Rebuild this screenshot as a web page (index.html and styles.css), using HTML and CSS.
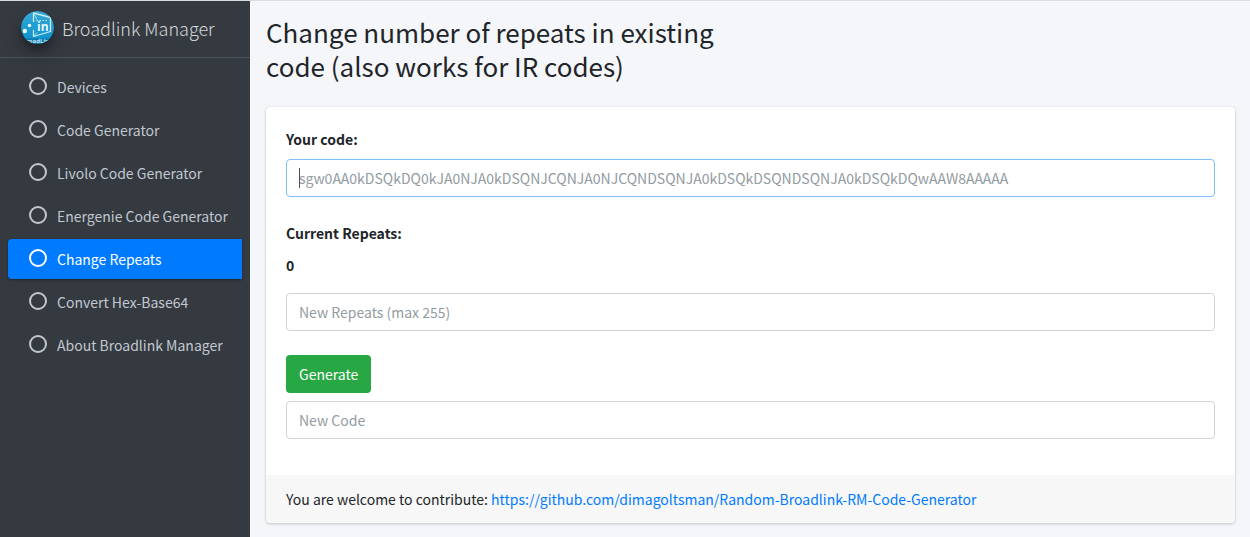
FILE: index.html
```
<!DOCTYPE html>
<html lang="en">
<head>
<meta charset="utf-8">
<meta name="viewport" content="width=device-width, initial-scale=1">
<title>Broadlink Manager</title>
<link rel="stylesheet" href="styles.css">
</head>
<body>
<div class="wrapper">
  <aside class="sidebar">
    <a class="brand" href="#">
      <svg class="brand-logo" viewBox="0 0 33 33" aria-hidden="true">
        <defs>
          <clipPath id="disc"><circle cx="16.5" cy="16.5" r="16.5"/></clipPath>
          <linearGradient id="sky" x1="0" y1="0" x2="0" y2="1"><stop offset="0" stop-color="#35a9d6"/><stop offset="1" stop-color="#0b8fce"/></linearGradient>
        </defs>
        <g clip-path="url(#disc)">
          <rect width="33" height="33" fill="url(#sky)"/>
          <g fill="none" stroke="#c9ebf7" stroke-linejoin="round">
            <path d="M12.500 11V2l17 4.500v14l-17 5V19" stroke-width="1.300"/>
            <path d="M12.500 2l3.500 6.500M12.500 25.500l3.500-4" stroke-width=".8"/>
            <path d="M15.500 9.500h12" stroke-width="1" stroke-dasharray="1.500 1.500"/>
          </g>
          <text class="logo-mark" x="16" y="20">in</text>
          <circle cx="8.500" cy="14.500" r="1.800" fill="#e8f8fd"/>
          <circle cx="3.800" cy="20" r="2.200" fill="#e8f8fd"/>
          <rect y="27.500" width="33" height="6" fill="#0877ab"/>
          <text class="logo-name" x="16.500" y="32">BroadLink</text>
        </g>
      </svg>
      <span class="brand-name">Broadlink Manager</span>
    </a>
    <nav class="menu">
      <a class="menu-link" href="#"><span class="ring"></span>Devices</a>
      <a class="menu-link" href="#"><span class="ring"></span>Code Generator</a>
      <a class="menu-link" href="#"><span class="ring"></span>Livolo Code Generator</a>
      <a class="menu-link" href="#"><span class="ring"></span>Energenie Code Generator</a>
      <a class="menu-link active" href="#" aria-current="page"><span class="ring"></span>Change Repeats</a>
      <a class="menu-link" href="#"><span class="ring"></span>Convert Hex-Base64</a>
      <a class="menu-link" href="#"><span class="ring"></span>About Broadlink Manager</a>
    </nav>
  </aside>
  <main class="content">
    <h1 class="title">Change number of repeats in existing code (also works for IR codes)</h1>
    <section class="card">
      <form class="card-body">
        <div class="group">
          <label class="label" for="code">Your code:</label>
          <div class="field">
            <input class="input focused" id="code" type="text" placeholder="sgw0AA0kDSQkDQ0kJA0NJA0kDSQNJCQNJA0NJCQNDSQNJA0kDSQkDSQNDSQNJA0kDSQkDQwAAW8AAAAA">
            <span class="caret"></span>
          </div>
        </div>
        <div class="group">
          <label class="label" for="repeats">Current Repeats:</label>
          <output class="label" for="code">0</output>
          <input class="input repeats" id="repeats" type="text" placeholder="New Repeats (max 255)">
        </div>
        <div class="group">
          <button class="button" type="button">Generate</button>
          <input class="input" id="result" type="text" aria-label="New Code" placeholder="New Code">
        </div>
      </form>
      <footer class="card-footer">You are welcome to contribute: <a class="link" href="https://github.com/dimagoltsman/Random-Broadlink-RM-Code-Generator">https://github.com/dimagoltsman/Random-Broadlink-RM-Code-Generator</a></footer>
    </section>
  </main>
</div>
</body>
</html>
```
FILE: styles.css
```
* {
  box-sizing: border-box;
}

body {
  margin: 0;
  background: #f4f6f9;
  color: #212529;
  font-family: "Source Sans Pro", "Noto Sans CJK SC", "Open Sans", sans-serif;
  font-size: 14px;
  line-height: 24px;
}

.wrapper {
  display: flex;
  min-height: 100vh;
  border-top: 1px solid #d9dcde;
}

.sidebar {
  flex: 0 0 250px;
  background: #343a40;
}

.brand {
  display: flex;
  align-items: center;
  gap: 8px;
  height: 57px;
  padding-left: 21px;
  border-bottom: 1px solid #4b545c;
  color: #d6d8d9;
  font-size: 18px;
  font-weight: 300;
  text-decoration: none;
}

.brand-logo {
  width: 33px;
  height: 33px;
  margin-bottom: 4px;
  border-radius: 50%;
  box-shadow: 0 10px 20px rgba(0, 0, 0, .19), 0 6px 6px rgba(0, 0, 0, .23);
}

.brand-name {
  margin-bottom: 2px;
}

.logo-mark {
  fill: #e8f8fd;
  font-family: "Open Sans", sans-serif;
  font-size: 12px;
  font-weight: 700;
}

.logo-name {
  fill: #c5e9f5;
  font-family: "Open Sans", sans-serif;
  font-size: 6px;
  font-weight: 700;
  text-anchor: middle;
}

.menu {
  display: flex;
  flex-direction: column;
  gap: 3px;
  padding: 9px 8px;
}

.menu-link {
  display: flex;
  align-items: center;
  gap: 10px;
  height: 40px;
  padding-left: 21px;
  border-radius: 4px;
  color: #c2c7d0;
  text-decoration: none;
  white-space: nowrap;
}

.menu-link.active {
  border-radius: 4px 0 0 4px;
  background: #007bff;
  color: #fff;
  box-shadow: 0 1px 3px rgba(0, 0, 0, .12), 0 1px 2px rgba(0, 0, 0, .24);
}

.ring {
  width: 18px;
  height: 18px;
  margin-bottom: 2px;
  border: 2px solid currentColor;
  border-radius: 50%;
}

.content {
  flex: 1;
  min-width: 0;
  padding: 14px 15px 14px 16px;
}

.title {
  max-width: 50%;
  margin: 0 0 24px;
  font-size: 26px;
  font-weight: 400;
  line-height: 34px;
}

.card {
  overflow: hidden;
  border-radius: 4px;
  background: #fff;
  box-shadow: 0 0 1px rgba(0, 0, 0, .125), 0 1px 3px rgba(0, 0, 0, .2);
}

.card-body {
  display: flex;
  flex-direction: column;
  gap: 24px;
  padding: 20px 20px 36px;
}

.group {
  display: flex;
  flex-direction: column;
  gap: 8px;
}

.label {
  font-weight: 700;
}

.field {
  position: relative;
}

.input {
  display: block;
  width: 100%;
  height: 38px;
  padding: 6px 12px;
  border: 1px solid #ced4da;
  border-radius: 4px;
  background: #fff;
  color: #495057;
  font: inherit;
}

.input::placeholder {
  color: #939ba2;
  opacity: 1;
}

.input.focused {
  border-color: #80bdff;
}

.input:focus {
  border-color: #80bdff;
  outline: 0;
}

.caret {
  position: absolute;
  top: 9px;
  left: 13px;
  width: 1px;
  height: 20px;
  background: #495057;
}

.repeats {
  margin-top: 8px;
}

.button {
  align-self: flex-start;
  height: 38px;
  padding: 6px 13px;
  border: 0;
  border-radius: 4px;
  background: #28a745;
  color: #fff;
  font: inherit;
}

.card-footer {
  padding: 12px 20px;
  background: #f7f7f7;
}

.link {
  color: #007bff;
  text-decoration: none;
}
```
